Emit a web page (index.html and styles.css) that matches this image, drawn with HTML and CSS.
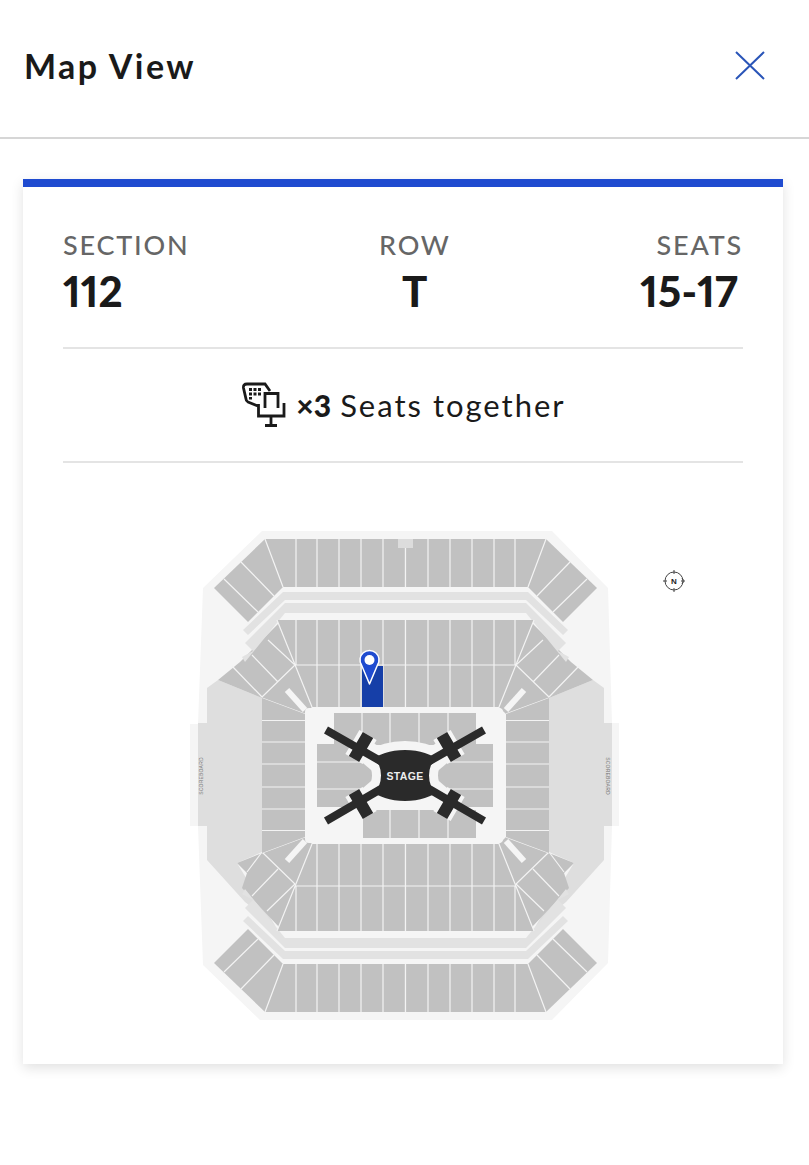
FILE: index.html
```html
<!DOCTYPE html>
<html lang="en">
<head>
<meta charset="utf-8">
<title>Map View</title>
<link rel="stylesheet" href="styles.css">
</head>
<body>
<header class="header">
  <h1 class="title">Map View</h1>
  <svg class="close" viewBox="0 0 30 29" aria-label="Close"><path d="M1 1 L29 28 M29 1 L1 28"/></svg>
</header>
<main class="content">
  <section class="card">
    <div class="stats">
      <div class="stat"><div class="label">SECTION</div><div class="value">112</div></div>
      <div class="stat stat-center"><div class="label">ROW</div><div class="value">T</div></div>
      <div class="stat stat-right"><div class="label">SEATS</div><div class="value value-seats">15-17</div></div>
    </div>
    <div class="together">
      <svg class="seat-icon" viewBox="243 383 45 46">
        <path class="i" d="M259 407 L249 403 Q247 402 247 400 L244.500 389 Q244 385 248 385 L266 385 L271 392"/>
        <path class="i2" d="M250 389h3v3h-3zM254.500 389h3v3h-3zM259 389h3v3h-3zM250 393.500h3v3h-3zM254.500 393.500h3v3h-3zM259 393.500h3v3h-3zM250 398h3v2.500h-3z"/>
        <path class="i" d="M266 409 V394.500 H279 V409 M259.500 405 V417 H285 V404 M272 417 V426 M266 426.500 H278"/>
      </svg>
      <span class="count">×3</span>
      <span class="together-text">Seats together</span>
    </div>
    <svg class="map" viewBox="63 463 680 601" aria-label="Seat map">
      <defs>
        <g id="zone-side">
          <path class="zone" d="M207 688 L218 680 L262 698 V852 L237 863 L276 927 L245 902 L207 860 Z"/>
        </g>
        <g id="quad">
          <path class="sec" d="M265 539 H406 V587 H283 Z"/>
          <path class="sec" d="M265 539 L283 587 L248 622 L214 588 Z"/>
          <path class="ln" d="M241 562 L274 596 M224 579 L258 612 M265 539 L283 587 M296 539V587M317 539V587M339 539V587M361 539V587M383 539V587M405.500 539V587"/>
          <path class="band" d="M406 592 H283 L243 630 L248 635 L285 600 H406 Z"/>
          <path class="band" d="M406 603 H285 L245 643 L253 651 L242 657 L245 662 L285 613 H406 Z"/>
          <path class="sec" d="M277 620 H406 V707 H312 Z"/>
          <path class="sec" d="M262 698 L305 714 V776 H262 Z"/>
          <path class="ln" d="M277 620 L312 707 M295 665 H406 M296 620V665M317 620V707M339 620V707M361 620V707M383 620V707M405.500 620V707"/>
          <path class="ln" d="M262 720.500 H305 M262 742 H305 M262 764 H305"/>
        </g>
        <g id="wedge-top">
          <path class="sec" d="M282 620 L240 662 L218 680 L262 698 L305 714 L312 707 L320 707 L300 640 Z"/>
          <path class="ln" d="M268 640 L295 665 L262 697 M252 655 L278 682 M232 666 L262 697 M262 698 L305 714"/>
          <path class="bar" d="M287 690 L305 710"/>
        </g>
        <g id="wedge-bottom">
          <path class="sec" d="M262 853 L305 837 L312 844 L320 844 L300 900 L279 927 L242 888 L247 873 L237 863 Z"/>
          <path class="ln" d="M262 852 L247 872 M278 869 L252 896 M262 852 L295 884 L267 911 M262 853 L305 837"/>
          <path class="bar" d="M287 861 L305 841"/>
        </g>
      </defs>
      <path class="bg" d="M262 531 H552 L608 588 L612 723 H619 V826 H612 L608 963 L552 1020 H260 L203 965 L198 826 H190 V724 H198 L203 588 Z"/>
      <use href="#zone-side"/>
      <use href="#zone-side" transform="matrix(-1 0 0 1 811 0)"/>
      <use href="#wedge-top"/>
      <use href="#wedge-top" transform="matrix(-1 0 0 1 811 0)"/>
      <use href="#wedge-bottom"/>
      <use href="#wedge-bottom" transform="matrix(-1 0 0 1 811 0)"/>
      <use href="#quad"/>
      <use href="#quad" transform="matrix(-1 0 0 1 811 0)"/>
      <use href="#quad" transform="matrix(1 0 0 -1 0 1551)"/>
      <use href="#quad" transform="matrix(-1 0 0 -1 811 1551)"/>
      <path class="sec-mini" d="M398 539 H413 V548 H398 Z"/>
      <path class="zone" d="M198 723 H207 V826 H198 Z M603 723 H612 V826 H603 Z"/>
      <text class="board" transform="translate(203 776) rotate(-90)">SCOREBOARD</text>
      <text class="board" transform="translate(606 776) rotate(90)">SCOREBOARD</text>
      <rect class="floor" x="305" y="708" width="198" height="135" rx="4"/>
      <path class="sec" d="M334 713 H476 V745 H334 Z M363 810 H476 V838 H363 Z M317 744 H373 V807 H317 Z M438 744 H493 V807 H438 Z"/>
      <path class="ln" d="M362 713V745M390 713V745M419 713V745M448 713V745M390 810V838M419 810V838M448 810V838M317 762H373M317 789H373M438 762H493M438 789H493"/>
      <g class="halo">
        <path d="M368 735 L354 759 M368 816 L354 792 M442 735 L456 759 M442 816 L456 792"/>
        <path d="M361 747 L405 775 L449 747 M361 804 L405 775 L449 804"/>
        <path class="hub-halo" d="M405 750 C420 750 432 755 438 759 L431 765 Q429 770 429 775.500 Q429 781 431 786 L438 792 C432 796 420 801 405 801 C390 801 378 796 372 792 L379 786 Q381 781 381 775.500 Q381 770 379 765 L372 759 C378 755 390 750 405 750 Z"/>
      </g>
      <g class="stage">
        <path class="arm" d="M326 730 L405 775 L484 730 M326 821 L405 775 L484 821"/>
        <path class="cross" d="M368 735 L354 759 M368 816 L354 792 M442 735 L456 759 M442 816 L456 792"/>
        <path class="hub" d="M405 750 C420 750 432 755 438 759 L431 765 Q429 770 429 775.500 Q429 781 431 786 L438 792 C432 796 420 801 405 801 C390 801 378 796 372 792 L379 786 Q381 781 381 775.500 Q381 770 379 765 L372 759 C378 755 390 750 405 750 Z"/>
      </g>
      <text class="stage-text" x="405" y="779.500">STAGE</text>
      <rect class="sel" x="362" y="666" width="21" height="41"/>
      <path class="pin" d="M369.500 684 L361.500 665 A 9.500 9.500 0 1 1 377.500 665 Z"/>
      <circle class="pin-dot" cx="369.500" cy="660" r="5"/>
      <circle class="compass" cx="674" cy="581" r="9"/>
      <path class="compass-ticks" d="M674 570 V574 M674 588 V592 M663 581 H667 M681 581 H684 M682 578.500 L684.500 581 L682 583.500"/>
      <text class="compass-n" x="674" y="584">N</text>
    </svg>
  </section>
</main>
</body>
</html>
```

FILE: styles.css
```css
* { box-sizing: border-box; }
html, body { margin: 0; padding: 0; background: #fff; }
body { font-family: Lato, "Open Sans", sans-serif; color: #1a1a1a; }
.header {
  height: 139px;
  padding: 0 44px 6px 24px;
  border-bottom: 2px solid #d6d6d6;
  display: flex;
  align-items: center;
  justify-content: space-between;
}
.title { margin: 0; font-size: 34px; font-weight: 700; letter-spacing: 2.4px; color: #1a1a1a; }
.close { width: 30px; height: 29px; display: block; }
.close path { fill: none; stroke: #2a55b8; stroke-width: 2; }
.content { padding: 40px 26px 40px 23px; }
.card {
  border-top: 8px solid #1f4bd0;
  background: #fff;
  box-shadow: 0 4px 12px rgba(0,0,0,.12);
  padding: 0 40px;
  height: 885px;
}
.stats {
  display: flex;
  justify-content: space-between;
  padding: 43px 0 33px;
  border-bottom: 2px solid #e4e4e4;
}
.stat-center { text-align: center; }
.stat-right { text-align: right; }
.label { font-size: 27px; line-height: 30px; letter-spacing: 1.800px; color: #666; font-weight: 500; margin-bottom: 8px; }
.value { font-size: 42px; line-height: 46px; font-weight: 900; color: #1a1a1a; font-variant-numeric: proportional-nums; letter-spacing: .2px; }
.value-seats { padding-right: 5px; }
.together {
  height: 114px;
  padding-left: 2px;
  display: flex;
  align-items: center;
  justify-content: center;
  border-bottom: 2px solid #e4e4e4;
  font-size: 31px;
  letter-spacing: 2px;
}
.seat-icon { width: 45px; height: 46px; margin-right: 9px; display: block; }
.i { fill: none; stroke: #1a1a1a; stroke-width: 2.800; }
.i2 { fill: #1a1a1a; }
.count { font-size: 30px; font-weight: 900; letter-spacing: 0; margin-right: 9px; }
.map { display: block; width: 680px; height: 601px; }
.bg { fill: #f5f5f5; }
.zone { fill: #dedede; }
.band { fill: #e2e2e2; }
.sec { fill: #c1c1c1; }
.sec-mini { fill: #dcdcdc; }
.ln { fill: none; stroke: #f3f3f3; stroke-width: 1.200; }
.bar { fill: none; stroke: #f5f5f5; stroke-width: 6; }
.floor { fill: #f5f5f5; }
.board { font: 5px "Liberation Sans", sans-serif; fill: #777; text-anchor: middle; letter-spacing: .2px; }
.halo { fill: none; stroke: #f5f5f5; }
.halo path { stroke-width: 20; }
.halo .hub-halo { fill: #f5f5f5; stroke-width: 18; }
.arm { fill: none; stroke: #2a2a2a; stroke-width: 8; }
.cross { fill: none; stroke: #2a2a2a; stroke-width: 12; }
.hub { fill: #2a2a2a; }
.stage-text { font: bold 10.500px "Liberation Sans", sans-serif; fill: #eee; text-anchor: middle; letter-spacing: .3px; }
.sel { fill: #163fa8; }
.pin { fill: #1f4bd0; stroke: #fff; stroke-width: 1.500; stroke-linejoin: round; }
.pin-dot { fill: #fff; }
.compass { fill: none; stroke: #444; stroke-width: 1; }
.compass-ticks { fill: none; stroke: #444; stroke-width: 1; }
.compass-n { font: bold 8px "Liberation Sans", sans-serif; fill: #222; text-anchor: middle; }
```
